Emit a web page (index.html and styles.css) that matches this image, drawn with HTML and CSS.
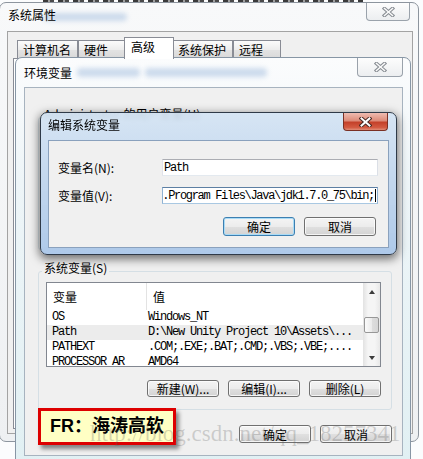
FILE: index.html
```html
<!DOCTYPE html>
<html lang="zh-CN">
<head>
    <meta charset="UTF-8">
    <meta name="viewport" content="width=device-width, initial-scale=1.0">
    <title>编辑系统变量</title>
    <link rel="stylesheet" href="styles.css">
</head>
<body>

    <!-- window peeking above everything -->
    <div class="peek"></div>

    <!-- 系统属性 -->
    <div class="win win-sys">
        <div class="titlebar">
            <span class="title">系统属性</span>
            <span class="haze haze-sys"></span>
            <span class="close close-idle">
                <svg width="13" height="10" viewBox="0 0 13 10"><path d="M2.5 1.5 L10.5 8.5 M10.5 1.5 L2.5 8.5" stroke="#8a8f95" stroke-width="3.6" stroke-linecap="square" fill="none"/><path d="M2.5 1.5 L10.5 8.5 M10.5 1.5 L2.5 8.5" stroke="#fbfbfb" stroke-width="1.5" stroke-linecap="square" fill="none"/></svg>
            </span>
        </div>
        <div class="client">
            <div class="tabs">
                <span class="tab">计算机名</span>
                <span class="tab">硬件</span>
                <span class="tab active">高级</span>
                <span class="tab">系统保护</span>
                <span class="tab">远程</span>
            </div>
            <div class="tabpanel"></div>
        </div>
    </div>

    <!-- 环境变量 -->
    <div class="win win-env">
        <div class="titlebar">
            <span class="title">环境变量</span>
            <span class="haze haze-env1"></span>
            <span class="haze haze-env2"></span>
            <span class="close close-idle">
                <svg width="13" height="10" viewBox="0 0 13 10"><path d="M2.5 1.5 L10.5 8.5 M10.5 1.5 L2.5 8.5" stroke="#8a8f95" stroke-width="3.6" stroke-linecap="square" fill="none"/><path d="M2.5 1.5 L10.5 8.5 M10.5 1.5 L2.5 8.5" stroke="#fbfbfb" stroke-width="1.5" stroke-linecap="square" fill="none"/></svg>
            </span>
        </div>
        <div class="client">
            <fieldset class="group group-user">
                <legend>Administrator 的用户变量(U)</legend>
            </fieldset>

            <fieldset class="group group-sys">
                <legend>系统变量(S)</legend>
                <div class="listview">
                    <div class="lv-main">
                        <div class="lv-head"><span class="c1">变量</span><span class="c2">值</span></div>
                        <div class="lv-row"><span class="c1">OS</span><span class="c2">Windows_NT</span></div>
                        <div class="lv-row sel"><span class="c1">Path</span><span class="c2">D:\New Unity Project 10\Assets\...</span></div>
                        <div class="lv-row"><span class="c1">PATHEXT</span><span class="c2">.COM;.EXE;.BAT;.CMD;.VBS;.VBE;....</span></div>
                        <div class="lv-row"><span class="c1">PROCESSOR_AR</span><span class="c2">AMD64</span></div>
                    </div>
                    <div class="vscroll">
                        <div class="sb-btn"><i class="arrow up"></i></div>
                        <div class="sb-track"><div class="sb-thumb"></div></div>
                        <div class="sb-btn"><i class="arrow down"></i></div>
                    </div>
                </div>
                <div class="btn-row">
                    <button class="btn">新建(W)...</button>
                    <button class="btn">编辑(I)...</button>
                    <button class="btn">删除(L)</button>
                </div>
            </fieldset>

            <div class="btn-row dlg-btns">
                <button class="btn">确定</button>
                <button class="btn">取消</button>
            </div>
        </div>
    </div>

    <!-- 编辑系统变量 (active) -->
    <div class="win win-edit">
        <div class="titlebar">
            <span class="title">编辑系统变量</span>
            <span class="close close-red">
                <svg width="13" height="10" viewBox="0 0 13 10"><path d="M2.5 1.5 L10.5 8.5 M10.5 1.5 L2.5 8.5" stroke="#4a2a24" stroke-width="4" stroke-linecap="square" fill="none"/><path d="M2.5 1.5 L10.5 8.5 M10.5 1.5 L2.5 8.5" stroke="#ffffff" stroke-width="2" stroke-linecap="square" fill="none"/></svg>
            </span>
        </div>
        <div class="client">
            <div class="form-row">
                <span class="label">变量名(N):</span>
                <div class="field">Path</div>
            </div>
            <div class="form-row">
                <span class="label">变量值(V):</span>
                <div class="field focus"><span>.Program Files\Java\jdk1.7.0_75\bin;</span><i class="caret"></i></div>
            </div>
            <div class="btn-row edit-btns">
                <button class="btn default">确定</button>
                <button class="btn">取消</button>
            </div>
        </div>
    </div>

    <div class="stamp">FR：海涛高软</div>
    <div class="watermark">http://blog.csdn.net/qq_18257341</div>

</body>
</html>
```

FILE: styles.css
```css
* {
    box-sizing: border-box;
}

body, html {
    margin: 0;
    padding: 0;
}

body {
    width: 423px;
    height: 459px;
    overflow: hidden;
    position: relative;
    background: #fbfcfd;
    font-family: "Noto Sans CJK SC", "Noto Sans", sans-serif;
    font-size: 12px;
    color: #000;
}

.peek {
    position: absolute;
    left: 43px;
    top: 0;
    width: 320px;
    height: 3px;
    background: repeating-linear-gradient(90deg, #3a3a3a 0 5px, #a0a0a0 5px 7px, #4a4a4a 7px 11px, transparent 11px 15px);
}

/* windows */
.win {
    position: absolute;
    display: flex;
    flex-direction: column;
    border-radius: 7px;
}

.titlebar {
    display: flex;
    align-items: center;
    flex-shrink: 0;
}

.title {
    position: relative;
    z-index: 1;
    line-height: 16px;
    white-space: nowrap;
}

.haze {
    height: 8px;
    border-radius: 4px;
    background: #a8c1e0;
    filter: blur(2.5px);
    opacity: 0.55;
}

.close {
    margin-left: auto;
    align-self: flex-start;
    display: flex;
    align-items: center;
    justify-content: center;
    border: 1px solid #9aa2ab;
    border-top: none;
    border-radius: 0 0 4px 4px;
}

.close-idle {
    background: linear-gradient(#fdfdfd, #eceef0);
}

.close-red {
    border-color: #7a3024;
    background: linear-gradient(#efbcb1 0%, #dd8b79 45%, #c4412a 55%, #d35a41 85%, #e08e78 100%);
}

.win-sys {
    left: -1px;
    top: 2px;
    width: 420px;
    height: 440px;
    border: 1px solid #8d959e;
    background: linear-gradient(#f8f9fa, #eef0f2);
}

.win-sys .titlebar {
    height: 28px;
    padding-left: 8px;
}

.win-sys .title {
    margin-bottom: 4px;
}

.haze-sys {
    width: 84px;
    margin-left: -13px;
    margin-bottom: 1px;
}

.win-sys .close {
    width: 44px;
    height: 18px;
    margin-right: 8px;
}

.win-sys .client {
    flex: 1;
    margin: 0 5px 7px 7px;
    background: #f0f0f0;
    border: 1px solid #a3a3a3;
    display: flex;
    flex-direction: column;
}

.tabs {
    display: flex;
    align-items: flex-end;
    height: 26px;
    padding-left: 9px;
}

.tab {
    height: 18px;
    min-width: 48px;
    padding: 0 6px 0 5px;
    border: 1px solid #898c95;
    border-bottom: none;
    background: linear-gradient(#fbfbfb, #ededed 50%, #e3e3e3 51%, #d9d9d9);
    line-height: 17px;
}

.tab.active {
    position: relative;
    z-index: 1;
    width: 50px;
    min-width: 0;
    height: 22px;
    margin: 0 -2px -1px;
    padding-left: 6px;
    background: #fff;
}

.tabpanel {
    flex: 1;
    margin: 0 4px 4px 5px;
    border: 1px solid #898c95;
    background: #fff;
}

/* 环境变量 */
.win-env {
    left: 15px;
    top: 57px;
    width: 396px;
    height: 412px;
    border: 1px solid #8796a5;
    background: linear-gradient(#fbfcfd, #eef5f8 30%, #e1f0f3);
}

.win-env .titlebar {
    height: 29px;
    padding-left: 8px;
}

.haze-env1 {
    width: 63px;
    height: 9px;
    margin-left: 5px;
}

.haze-env2 {
    width: 122px;
    height: 9px;
    margin-left: 5px;
}

.win-env .close {
    width: 46px;
    height: 19px;
    margin-right: 7px;
}

.win-env .client {
    flex: none;
    height: 369px;
    margin: 0 7px 0 8px;
    padding: 0 10px 0 13px;
    border: 1px solid #a7b3bf;
    background: #f0f0f0;
}

.group {
    margin: 0;
    min-width: 0;
    border: 1px solid #d5dfe5;
    border-radius: 3px;
    padding: 0 10px 12px 7px;
}

.group legend {
    margin-left: -4px;
    padding: 0 2px 6px;
    line-height: 16px;
}

.group-user {
    margin-top: 18px;
    height: 144px;
}

.group-sys {
    margin-top: 10px;
}

.listview {
    display: flex;
    height: 85px;
    border: 1px solid #828790;
    background: #fff;
}

.lv-main {
    flex: 1;
    overflow: hidden;
}

.lv-head {
    display: flex;
    height: 27px;
}

.lv-head span {
    display: flex;
    align-items: center;
}

.lv-head .c1 {
    width: 100px;
    padding-left: 6px;
    border-right: 1px solid #e3e3e3;
}

.lv-head .c2 {
    padding-left: 6px;
}

.lv-row {
    display: flex;
    height: 15px;
    line-height: 15px;
    font-family: "Liberation Mono", monospace;
    font-size: 12px;
    letter-spacing: -1.2px;
    white-space: nowrap;
}

.lv-row .c1 {
    width: 100px;
    padding-left: 5px;
}

.lv-row .c2 {
    padding-left: 1px;
}

.lv-row.sel {
    background: #ececec;
}

.vscroll {
    width: 17px;
    display: flex;
    flex-direction: column;
    background: linear-gradient(90deg, #e2e2e2, #f5f5f5 30%, #f5f5f5 70%, #e8e8e8);
}

.sb-btn {
    height: 17px;
    display: flex;
    align-items: center;
    justify-content: center;
}

.sb-track {
    flex: 1;
}

.sb-thumb {
    height: 16px;
    margin: 17px 1px 0;
    border: 1px solid #979797;
    border-radius: 2px;
    background: linear-gradient(90deg, #fbfbfb, #ececec 50%, #dedede 51%, #d6d6d6);
}

.arrow {
    width: 0;
    height: 0;
    border-left: 3.5px solid transparent;
    border-right: 3.5px solid transparent;
}

.arrow.up {
    border-bottom: 4px solid #3c3c3c;
}

.arrow.down {
    border-top: 4px solid #3c3c3c;
}

/* buttons */
.btn-row {
    display: flex;
    justify-content: flex-end;
    gap: 9px;
    margin-top: 13px;
}

.btn {
    width: 72px;
    height: 17px;
    padding: 0;
    font: inherit;
    font-size: 12px;
    line-height: 15px;
    color: #000;
    border: 1px solid #707070;
    border-radius: 3px;
    background: linear-gradient(#f4f4f4, #ececec 50%, #e0e0e0 51%, #d3d3d3);
    box-shadow: inset 0 0 0 1px rgba(255, 255, 255, 0.75);
}

.dlg-btns {
    margin-top: 15px;
}

.dlg-btns .btn {
    height: 18px;
}

/* 编辑系统变量 */
.win-edit {
    left: 40px;
    top: 112px;
    width: 357px;
    height: 143px;
    border: 1px solid #2f3a48;
    background: linear-gradient(rgba(212, 228, 244, 0.92), rgba(190, 212, 237, 0.92) 50%, rgba(170, 199, 233, 0.94));
    backdrop-filter: blur(2px);
    box-shadow: 0 3px 10px 1px rgba(0, 0, 0, 0.55);
}

.win-edit .titlebar {
    height: 27px;
    padding-left: 7px;
}

.win-edit .title {
    margin-bottom: 3px;
}

.win-edit .close {
    width: 45px;
    height: 18px;
    margin-right: 8px;
}

.win-edit .client {
    height: 108px;
    margin: 0 7px;
    padding: 18px 10px 0 9px;
    border: 1px solid #8aa1bd;
    background: #f0f0f0;
}

.form-row {
    display: flex;
    align-items: center;
    height: 17px;
}

.form-row + .form-row {
    margin-top: 11px;
}

.label {
    width: 104px;
    white-space: nowrap;
}

.field {
    flex: 1;
    display: flex;
    align-items: center;
    height: 17px;
    padding: 0 1px;
    overflow: hidden;
    white-space: nowrap;
    border: 1px solid #abadb3;
    border-color: #abadb3 #dbdfe6 #e3e9ef #e2e3ea;
    background: #fff;
    font-family: "Liberation Mono", monospace;
    font-size: 12px;
    letter-spacing: -1.2px;
}

.field.focus {
    justify-content: flex-end;
    letter-spacing: -1.32px;
    border-color: #5d7fa3 #8fb2d3 #a9c8e2 #8fb2d3;
}

.caret {
    flex: none;
    width: 1px;
    height: 13px;
    margin-left: 1px;
    background: #000;
}

.edit-btns {
    margin-top: 13px;
    padding-right: 2px;
}

.edit-btns .btn {
    height: 19px;
}

.btn.default {
    border-color: #3c7fb1;
    box-shadow: inset 0 0 0 1px #a9dbf6;
}

/* overlays */
.stamp {
    position: absolute;
    left: 38px;
    top: 408px;
    width: 138px;
    height: 37px;
    z-index: 5;
    padding-left: 9px;
    border: 3px solid #dd0000;
    background: #ffffc4;
    box-shadow: 3px 4px 4px rgba(0, 0, 0, 0.45);
    font-family: "Liberation Sans", "Noto Sans CJK SC", sans-serif;
    font-weight: bold;
    font-size: 18px;
    line-height: 31px;
    white-space: nowrap;
}

.watermark {
    position: absolute;
    left: 90px;
    top: 421px;
    z-index: 6;
    font-family: "Liberation Serif", serif;
    font-size: 23px;
    line-height: 26px;
    color: rgba(90, 90, 90, 0.25);
    white-space: nowrap;
}
```
